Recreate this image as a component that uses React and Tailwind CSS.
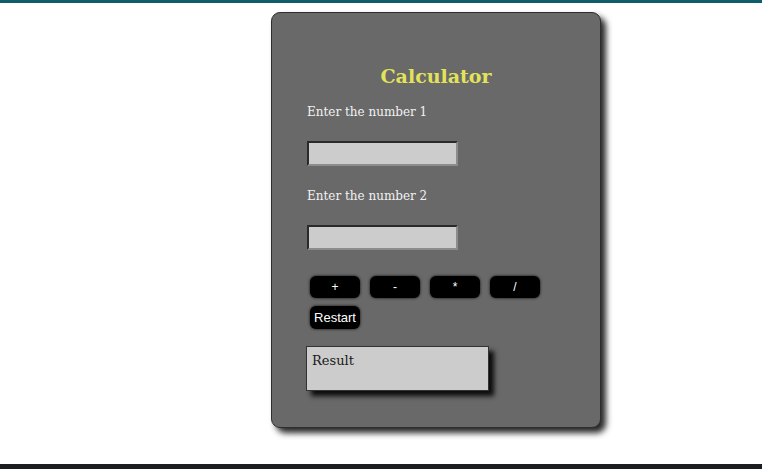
import React from "react";

const ops = ["+", "-", "*", "/"];

export default function App() {
  return (
    <div className="h-[469px] w-full bg-white flex flex-col overflow-hidden">
      <div className="h-[3px] bg-[#0f5d69]" />
      <div className="flex-1">
        <div className="ml-[271px] mt-[9px] w-[330px] h-[416px] bg-[#696969] border border-[#2e2e2e] rounded-[9px] shadow-[5px_5px_6px_rgba(0,0,0,0.85)] pl-[35px] pt-[50px] font-['DejaVu_Serif',serif]">
          <h1 className="text-center pr-[35px] text-[19px] font-bold text-[#e3e35a] leading-[26px]">Calculator</h1>
          <p className="mt-[14px] text-[12px] text-[#f2f2f2] leading-[18px]">Enter the number 1</p>
          <input className="block mt-[20px] w-[151px] h-[25px] bg-[#cccccc] border-2 border-t-[#2a2a2a] border-l-[#2a2a2a] border-b-[#8c8c8c] border-r-[#8c8c8c] outline-none" />
          <p className="mt-[21px] text-[12px] text-[#f2f2f2] leading-[18px]">Enter the number 2</p>
          <input className="block mt-[20px] w-[151px] h-[25px] bg-[#cccccc] border-2 border-t-[#2a2a2a] border-l-[#2a2a2a] border-b-[#8c8c8c] border-r-[#8c8c8c] outline-none" />
          <div className="mt-[26px] ml-[3px] flex flex-wrap gap-x-[10px] gap-y-[8px] w-[240px] font-['Liberation_Sans',sans-serif]">
            {ops.map((op) => (
              <button key={op} className="w-[50px] h-[22px] bg-black text-white text-[12px] rounded-[6px] shadow-[0_0_3px_rgba(0,0,0,0.9)]">
                {op}
              </button>
            ))}
            <button className="w-[50px] h-[23px] bg-black text-white text-[13px] rounded-[6px] shadow-[0_0_3px_rgba(0,0,0,0.9)]">
              Restart
            </button>
          </div>
          <div className="mt-[17px] -ml-px w-[183px] h-[45px] bg-[#cccccc] border border-[#333333] shadow-[5px_5px_5px_rgba(0,0,0,0.9)] px-[5px] pt-[4px] text-[13px] text-[#1a1a1a]">
            Result
          </div>
        </div>
      </div>
      <div className="h-[5px] bg-[#1b1e21]" />
    </div>
  );
}
